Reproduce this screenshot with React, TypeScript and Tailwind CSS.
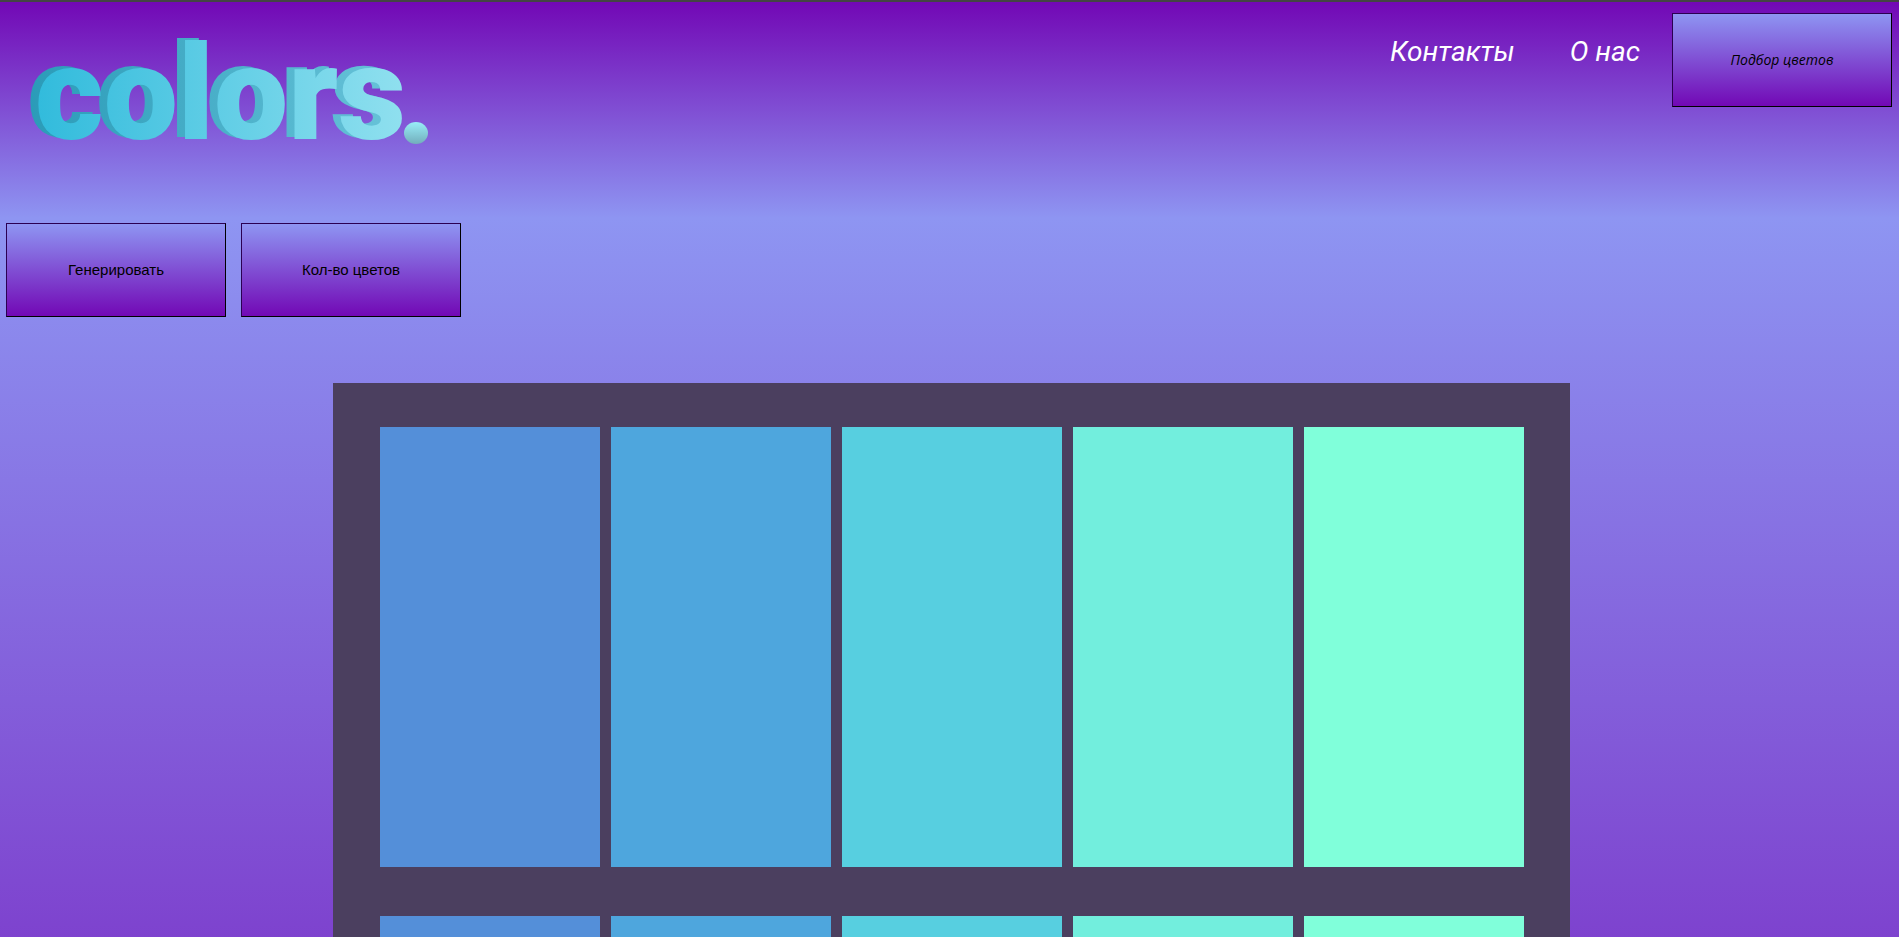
import type { ReactNode } from "react";

const palette = [
  { name: "blue", className: "bg-[#548fd9]" },
  { name: "sky", className: "bg-[#4ea6dd]" },
  { name: "cyan", className: "bg-[#57cfe0]" },
  { name: "turquoise", className: "bg-[#72eedd]" },
  { name: "mint", className: "bg-[#80ffda]" },
];

const rows = [0, 1];

function GradientButton({ children, className = "" }: { children: ReactNode; className?: string }) {
  return (
    <button
      type="button"
      className={`h-[94px] w-[220px] shrink-0 border border-t-[#2b0052] border-l-[#2b0052] border-r-black border-b-black bg-linear-to-b/srgb from-[#8e95f2] to-[#7208b5] text-black ${className}`}
    >
      {children}
    </button>
  );
}

function Logo() {
  return (
    <svg width="430" height="170" viewBox="0 0 430 170" className="font-[Roboto,sans-serif] font-black" role="img" aria-label="colors.">
      <defs>
        <linearGradient id="front" x1="0" y1="0" x2="1" y2="0">
          <stop offset="0" stopColor="#31bbdc" />
          <stop offset="1" stopColor="#90e0ef" />
        </linearGradient>
        <linearGradient id="side" x1="0" y1="0" x2="1" y2="0">
          <stop offset="0" stopColor="#2a9bb8" />
          <stop offset="1" stopColor="#68c3d9" />
        </linearGradient>
        <linearGradient id="dot" x1="0" y1="0" x2="0" y2="1">
          <stop offset="0" stopColor="#98edf8" />
          <stop offset="1" stopColor="#72aebb" />
        </linearGradient>
        <text id="word" x="35" y="137" fontSize="132">colors</text>
      </defs>
      {/* extruded side, then the face */}
      <use href="#word" x="-8" y="-2" fill="url(#side)" />
      <use href="#word" fill="url(#front)" />
      <ellipse cx="416" cy="131" rx="12" ry="11" fill="url(#dot)" />
    </svg>
  );
}

export default function App() {
  return (
    <div className="bg-[#7208b5] font-[Roboto,sans-serif]">
      <header className="flex items-start justify-between border-t-2 border-[#444444] bg-linear-to-b/srgb from-[#7208b5] to-[#8e95f2] pr-[7px] pb-[46px]">
        <a href="#" className="block">
          <Logo />
        </a>
        <nav className="flex items-start pt-[11px] italic">
          <a href="#contacts" className="mt-[21px] mr-[55px] text-[28px] leading-9 text-white">
            Контакты
          </a>
          <a href="#about" className="mt-[21px] mr-8 text-[28px] leading-9 text-white">
            О нас
          </a>
          <GradientButton className="font-['Open_Sans',sans-serif] text-sm italic">Подбор цветов</GradientButton>
        </nav>
      </header>

      <main className="bg-linear-to-b/srgb from-[#8e95f2] to-[#7208b5] pb-12">
        <div className="flex gap-[15px] px-1.5 pt-[5px] font-['Liberation_Sans',sans-serif]">
          <GradientButton className="text-[15px]">Генерировать</GradientButton>
          <GradientButton className="text-[15px]">Кол-во цветов</GradientButton>
        </div>

        <div className="mt-[66px] flex justify-center pl-1">
          <section className="flex flex-col gap-[49px] bg-[#4b3f5f] py-11 pr-[46px] pl-[47px]">
            {rows.map((row) => (
              <div key={row} className="flex gap-[11px]">
                {palette.map((color) => (
                  <div key={color.name} className={`h-[440px] w-[220px] ${color.className}`} />
                ))}
              </div>
            ))}
          </section>
        </div>
      </main>
    </div>
  );
}
